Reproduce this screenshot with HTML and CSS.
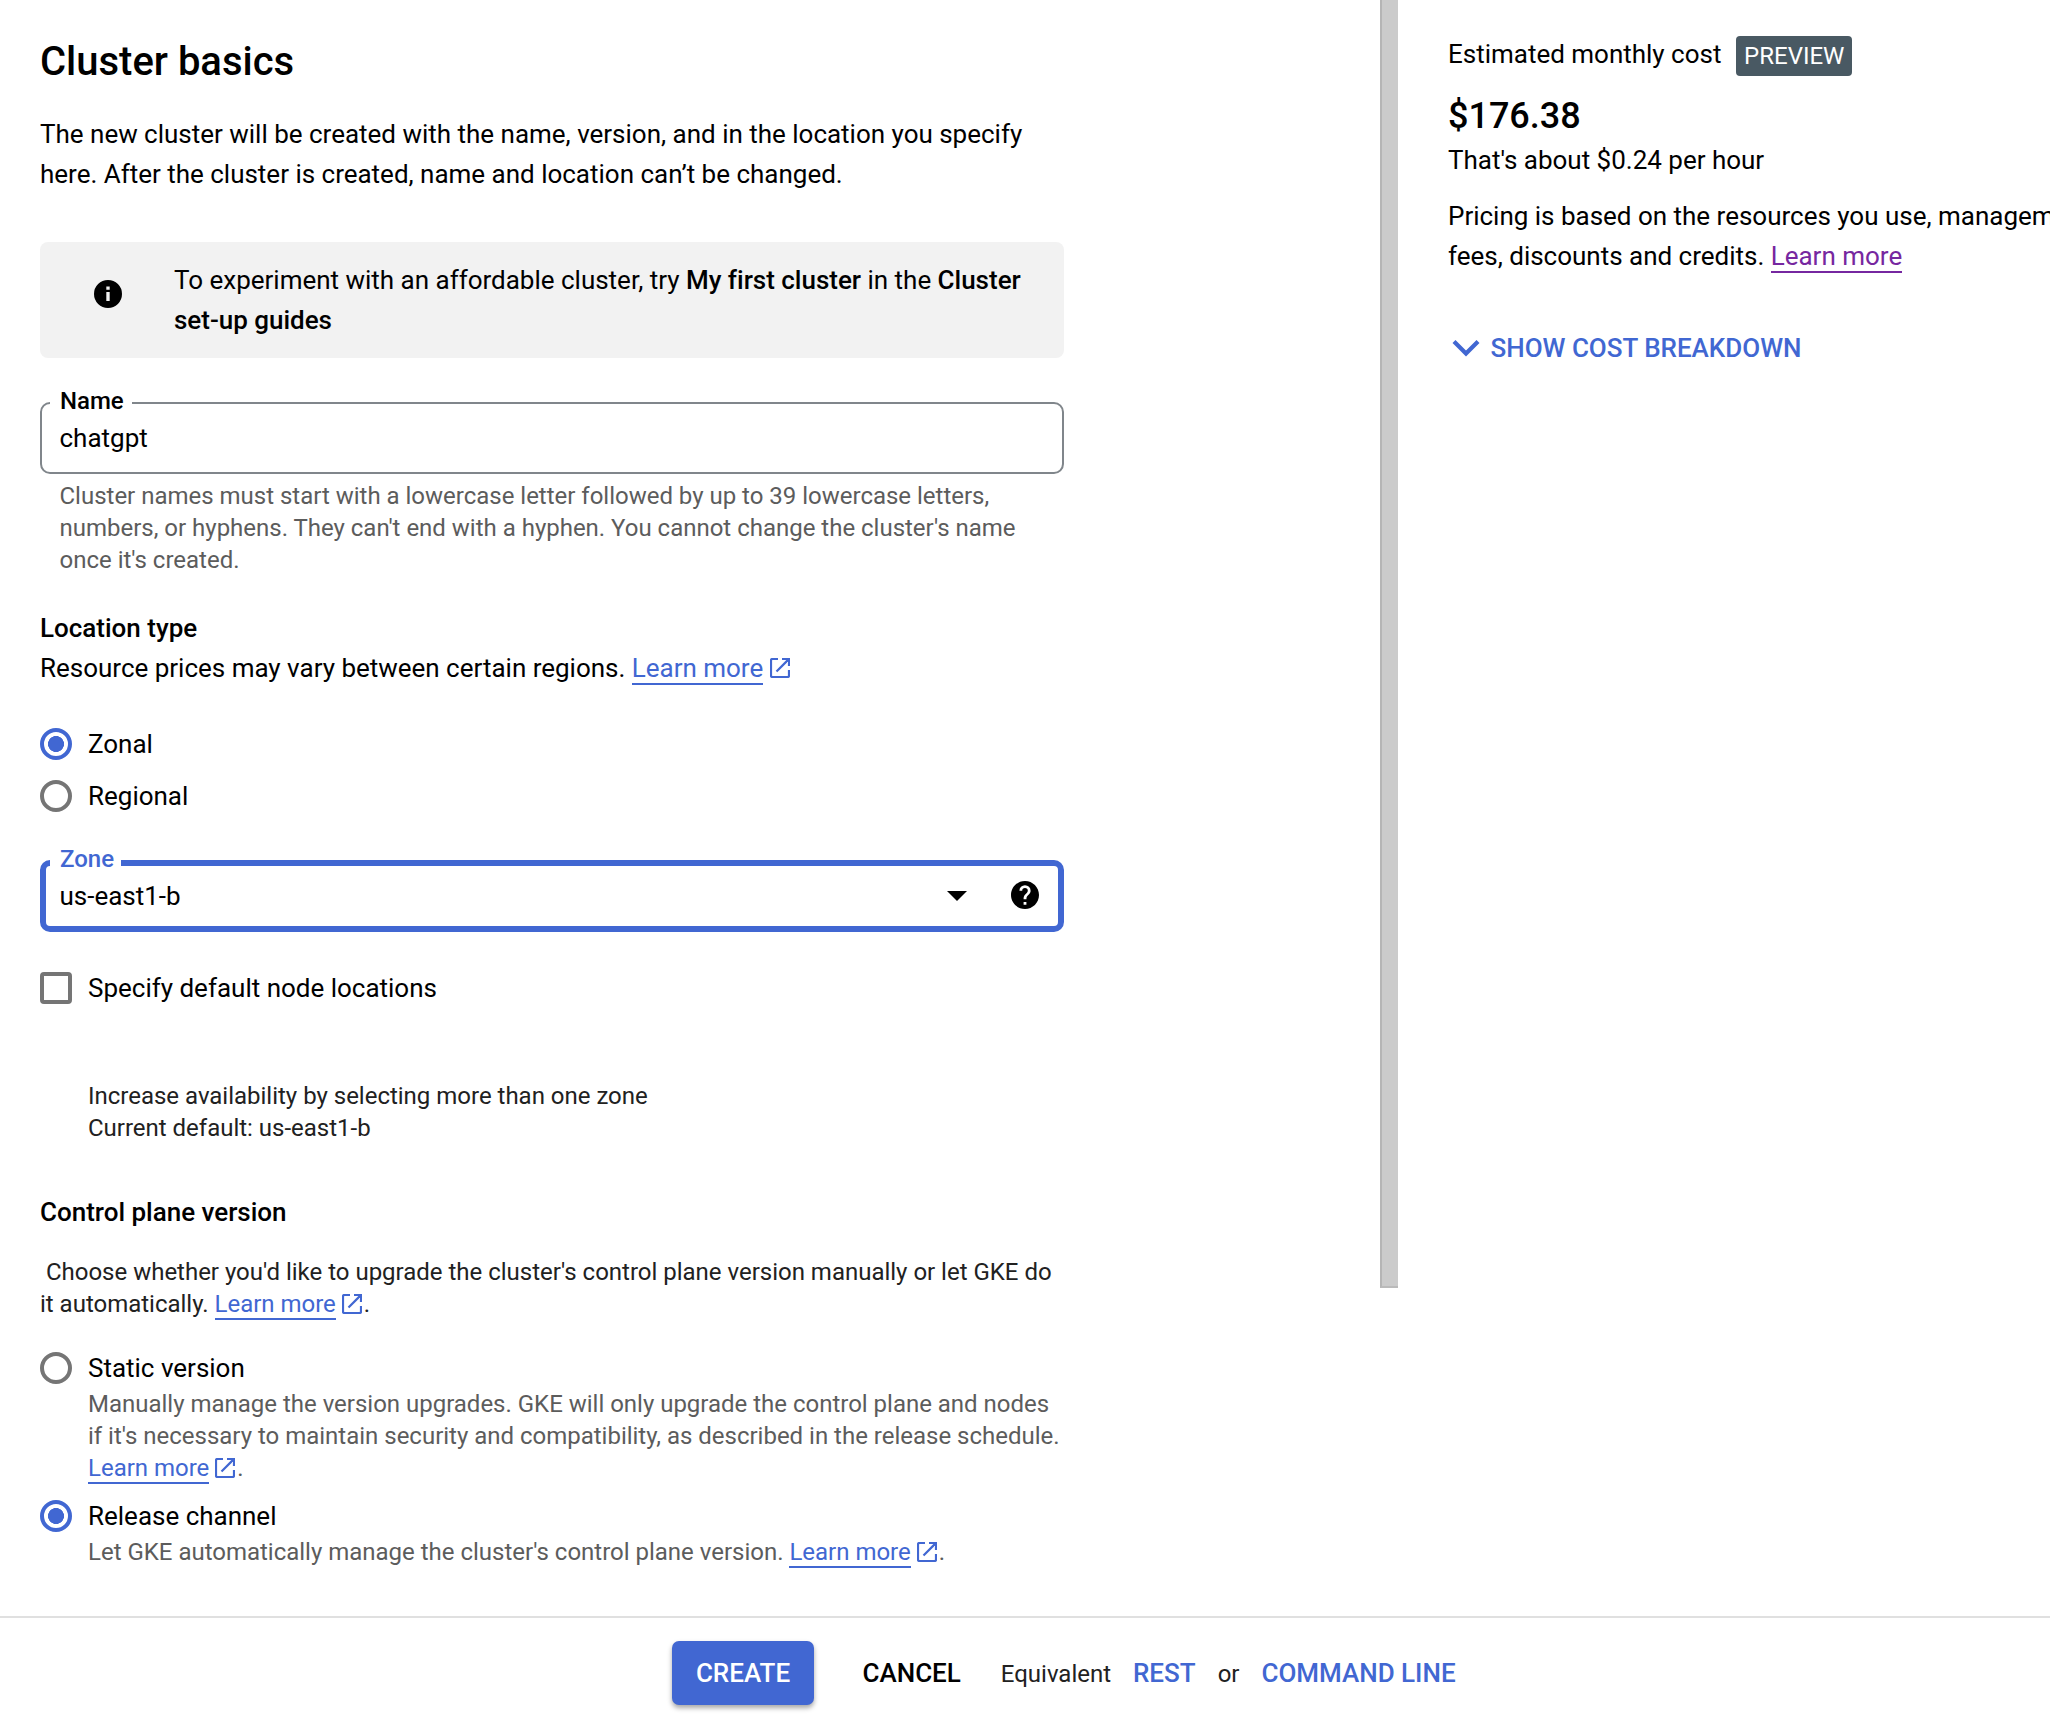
FILE: index.html
```html
<!DOCTYPE html>
<html lang="en">
<head>
<meta charset="utf-8">
<title>Create a Kubernetes cluster</title>
<link rel="stylesheet" href="styles.css">
</head>
<body>
<svg class="sprite" aria-hidden="true">
  <symbol id="open-new" viewBox="0 0 20 20">
    <path d="M8 1H2.4Q1 1 1 2.4V17.600Q1 19 2.400 19H17.600Q19 19 19 17.600V12M12 1H19V8M18.600 1.400L6.500 13.500" fill="none" stroke="currentColor" stroke-width="2.200"/>
  </symbol>
</svg>
<div class="page">
  <main class="workspace">
    <section class="form">
      <h1 class="title">Cluster basics</h1>
      <p class="intro">The new cluster will be created with the name, version, and in the location you specify<br>here. After the cluster is created, name and location can’t be changed.</p>

      <div class="banner">
        <svg class="banner-icon" viewBox="2 2 20 20"><path d="M12 2a10 10 0 1 0 0 20 10 10 0 0 0 0-20zm1.200 15h-2.400v-6.500h2.400zm0-8h-2.400V6.600h2.400z" fill="#000"/></svg>
        <p class="banner-text">To experiment with an affordable cluster, try <b>My first cluster</b> in the <b>Cluster<br>set-up guides</b></p>
      </div>

      <div class="field">
        <span class="field-label">Name</span>
        <span class="field-value">chatgpt</span>
      </div>
      <p class="hint">Cluster names must start with a lowercase letter followed by up to 39 lowercase letters,<br>numbers, or hyphens. They can't end with a hyphen. You cannot change the cluster's name<br>once it's created.</p>

      <h2 class="subtitle">Location type</h2>
      <p class="body-text">Resource prices may vary between certain regions. <a class="link">Learn more</a><svg class="external"><use href="#open-new"/></svg></p>

      <div class="radio-group">
        <div class="option"><span class="radio radio-on"></span><span>Zonal</span></div>
        <div class="option"><span class="radio"></span><span>Regional</span></div>
      </div>

      <div class="field field-focused">
        <span class="field-label">Zone</span>
        <span class="field-value">us-east1-b</span>
        <svg class="caret" viewBox="0 0 20 10"><path d="M0 0H20L10 10z" fill="#000"/></svg>
        <svg class="help" viewBox="2 2 20 20"><path d="M12 2C6.480 2 2 6.480 2 12s4.480 10 10 10 10-4.480 10-10S17.520 2 12 2zm1 17h-2v-2h2zm2.070-7.750-.9.920C13.450 12.900 13 13.500 13 15h-2v-.5c0-1.100.45-2.100 1.170-2.830l1.240-1.260c.37-.36.590-.86.590-1.410a2 2 0 0 0-4 0H8a4 4 0 0 1 8 0c0 .88-.36 1.680-.93 2.250z" fill="#000" fill-rule="evenodd"/></svg>
      </div>

      <div class="option checkbox-row"><span class="checkbox"></span><span>Specify default node locations</span></div>
      <p class="note">Increase availability by selecting more than one zone<br>Current default: us-east1-b</p>

      <h2 class="subtitle plane-title">Control plane version</h2>
      <p class="plane-text">&nbsp;Choose whether you'd like to upgrade the cluster's control plane version manually or let GKE do<br>it automatically. <a class="link">Learn more</a><svg class="external"><use href="#open-new"/></svg>.</p>

      <div class="option"><span class="radio"></span><span>Static version</span></div>
      <p class="option-text">Manually manage the version upgrades. GKE will only upgrade the control plane and nodes<br>if it's necessary to maintain security and compatibility, as described in the release schedule.<br><a class="link">Learn more</a><svg class="external"><use href="#open-new"/></svg>.</p>
      <div class="option release"><span class="radio radio-on"></span><span>Release channel</span></div>
      <p class="option-text">Let GKE automatically manage the cluster's control plane version. <a class="link">Learn more</a><svg class="external"><use href="#open-new"/></svg>.</p>
    </section>

    <div class="scrollbar"></div>

    <aside class="cost">
      <div class="cost-head"><span>Estimated monthly cost</span><span class="badge">PREVIEW</span></div>
      <div class="price">$176.38</div>
      <p class="hourly">That's about $0.24 per hour</p>
      <p class="pricing">Pricing is based on the resources you use, management<br>fees, discounts and credits. <a class="link visited">Learn more</a></p>
      <div class="breakdown">
        <svg class="chevron" viewBox="0 0 28 18"><path d="M2 2.500L14 14.500L26 2.500" fill="none" stroke="currentColor" stroke-width="4.200"/></svg>
        <span>SHOW COST BREAKDOWN</span>
      </div>
    </aside>
  </main>

  <footer class="actions">
    <button class="create">CREATE</button>
    <span class="cancel">CANCEL</span>
    <span class="equivalent">Equivalent</span>
    <span class="action-link">REST</span>
    <span class="or">or</span>
    <span class="action-link">COMMAND LINE</span>
  </footer>
</div>
</body>
</html>
```
FILE: styles.css
```css
* { box-sizing: border-box; }
body {
  margin: 0;
  background: #fff;
  color: #000;
  font: 400 26px/40px Roboto, sans-serif;
  letter-spacing: -0.01px;
  overflow: hidden;
}
h1, h2, p { margin: 0; }
b { font-weight: 500; }
.sprite { display: none; }

.page { display: flex; flex-direction: column; width: 2050px; height: 1728px; overflow: hidden; }
.workspace { display: flex; height: 1616px; white-space: nowrap; }
.form { width: 1064px; padding: 38px 0 0 40px; margin-right: 316px; flex: none; }
.title { font-size: 40px; line-height: 48px; font-weight: 500; margin-bottom: 28px; }

.banner {
  display: flex;
  align-items: center;
  height: 116px;
  margin: 48px 0 44px;
  padding: 0 0 0 54px;
  border-radius: 8px;
  background: #f2f2f2;
}
.banner-icon { width: 28px; height: 28px; margin: -12px 52px 0 0; }

.field {
  position: relative;
  display: flex;
  align-items: center;
  height: 72px;
  padding: 0 23px 0 17.500px;
  border: 2px solid #80868b;
  border-radius: 10px;
}
.field-label {
  position: absolute;
  top: -19px;
  left: 8px;
  padding: 0 8px 0 10px;
  background: #fff;
  font-size: 24px;
  line-height: 32px;
  font-weight: 500;
}
.field-value { flex: 1; }
.field-focused { margin-top: 48px; border: 6px solid #4167d2; padding: 0 19px 0 13.500px; }
.field-focused .field-label { top: -23px; left: 4px; padding-right: 7px; color: #4167d2; }
.caret { width: 20px; height: 10px; margin-right: 44px; }
.help { width: 28px; height: 28px; margin-top: -2px; }

.hint { margin: 6px 0 32px 19.500px; color: #5c5c5c; font-size: 24px; line-height: 32px; }
.subtitle { font-size: 26px; line-height: 40px; font-weight: 500; }

.link { color: #4167d2; border-bottom: 2px solid #4167d2; }
.visited { color: #7627a0; border-color: #7627a0; }
.external { width: 20px; height: 20px; margin: 0 2px 0 6px; vertical-align: -2px; color: #4167d2; }
.body-text .external { margin-left: 7px; vertical-align: -1px; }

.radio-group { display: flex; flex-direction: column; gap: 20px; margin-top: 40px; }
.option { display: flex; align-items: center; gap: 16px; height: 32px; line-height: 32px; }
.radio { width: 32px; height: 32px; border: 4px solid #757575; border-radius: 50%; }
.radio-on { border-color: #4167d2; background: radial-gradient(circle, #4167d2 7.700px, transparent 8.300px); }
.checkbox-row { margin-top: 40px; }
.checkbox { width: 32px; height: 32px; border: 4px solid #757575; border-radius: 4px; }

.note { margin: 76px 0 0 48px; color: #212121; font-size: 24px; line-height: 32px; }
.plane-title { margin-top: 48px; }
.plane-text { margin: 24px 0 32px; color: #212121; font-size: 24px; line-height: 32px; }
.option-text { margin: 4px 0 0 48px; color: #5c5c5c; font-size: 24px; line-height: 32px; }
.release { margin-top: 16px; }

.scrollbar {
  flex: none;
  width: 18px;
  height: 1288px;
  background: #cbcbcb;
  border-left: 2px solid #b5b5b5;
  border-bottom: 2px solid #bababa;
}

.cost { width: 652px; padding: 34px 0 0 50px; overflow: hidden; }
.cost-head { display: flex; height: 42px; }
.badge {
  height: 40px;
  margin: 2px 0 0 14.700px;
  padding: 0 8px;
  border-radius: 4px;
  background: #495963;
  color: #fff;
  font-size: 24px;
}
.price { margin-top: 16px; font-size: 36px; line-height: 48px; font-weight: 500; }
.pricing { margin-top: 16px; }
.breakdown { display: flex; align-items: center; margin: 52px 0 0 4px; color: #4167d2; font-weight: 500; }
.chevron { width: 28px; height: 18px; margin-right: 10.500px; }

.actions {
  display: flex;
  align-items: center;
  height: 112px;
  border-top: 2px solid #e0e0e0;
  padding-left: 672px;
  font-weight: 500;
  white-space: nowrap;
}
.create {
  width: 142px;
  height: 64px;
  padding: 0;
  border: 0;
  border-radius: 7px;
  background: #4167d2;
  color: #fff;
  font: inherit;
  box-shadow: 0 3px 5px rgba(0, 0, 0, .35);
}
.cancel { margin-left: 48.500px; }
.equivalent, .or { position: relative; top: 1px; color: #212121; font-size: 24px; font-weight: 400; }
.equivalent { margin: 0 22px 0 40px; }
.or { margin: 0 22px; }
.action-link { color: #4167d2; }
```
